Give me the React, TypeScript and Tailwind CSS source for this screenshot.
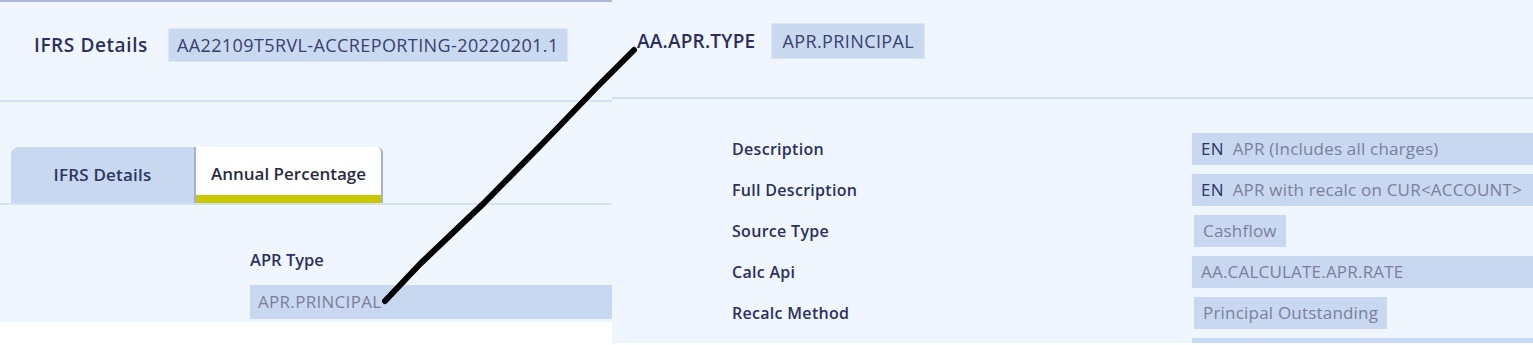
const FONT = "font-['Open_Sans',_'Noto_Sans',_sans-serif]"

interface DetailRow {
  label: string
  value: string
  lang?: string
  fit?: boolean
}

const ROWS: DetailRow[] = [
  { label: 'Description', value: 'APR (Includes all charges)', lang: 'EN' },
  { label: 'Full Description', value: 'APR with recalc on CUR<ACCOUNT>', lang: 'EN' },
  { label: 'Source Type', value: 'Cashflow', fit: true },
  { label: 'Calc Api', value: 'AA.CALCULATE.APR.RATE' },
  { label: 'Recalc Method', value: 'Principal Outstanding', fit: true },
  { label: '', value: '' },
]

function LeftPanel() {
  return (
    <section className="flex h-[322px] w-[612px] shrink-0 flex-col border-t-2 border-[#a9b6d5] bg-[#eff6fe]">
      <div className="flex h-[98px] shrink-0 items-start pl-[34px] pt-[26px]">
        <div className="flex h-[34px] items-center gap-5">
          <span className="text-[19px] font-semibold tracking-[0.6px] text-[#2b3061]">IFRS Details</span>
          <div className="flex h-[34px] items-center border border-[#dde6f2] bg-[#c9d9f0] px-2 text-[18px] tracking-[0.4px] text-[#3a3f6e]">
            AA22109T5RVL-ACCREPORTING-20220201.1
          </div>
        </div>
      </div>
      <div className="h-[2px] shrink-0 bg-[#d2e1f4]" />

      <div className="flex shrink-0 border-b-2 border-[#d2e1f4] pl-[11px] pt-[45px]">
        <div className="flex h-[56px] w-[183px] items-center justify-center rounded-tl-lg bg-[#c8d8f0] text-[17px] font-semibold tracking-[0.2px] text-[#2e3463]">
          IFRS Details
        </div>
        <div className="flex h-[56px] w-[189px] flex-col rounded-tr-md border-l-2 border-r-2 border-[#a5b1cf] bg-white">
          <div className="flex flex-1 items-center justify-center pt-[6px] text-[17px] font-semibold text-[#2b2b3f]">
            Annual Percentage
          </div>
          <div className="h-[8px] bg-[#c9c800]" />
        </div>
      </div>

      <div className="flex flex-col pl-[250px] pt-[43px]">
        <span className="text-[16.5px] font-semibold text-[#2b3061]">APR Type</span>
        <div className="mt-[12px] flex h-[34px] items-center bg-[#c8d8f0] px-2 text-[17px] tracking-[0.3px] text-[#7c7f9c]">
          APR.PRINCIPAL
        </div>
      </div>
    </section>
  )
}

function RightPanel() {
  return (
    <section className="flex h-[343px] flex-1 flex-col overflow-hidden bg-[#eff6fe]">
      <div className="flex h-[97px] shrink-0 items-start pl-[25px] pt-[23px]">
        <div className="flex h-[36px] items-center gap-[16px]">
          <span className="text-[19px] font-semibold tracking-[0.2px] text-[#2b3061]">AA.APR.TYPE</span>
          <div className="flex h-[36px] items-center border border-[#dde6f2] bg-[#c9d9f0] px-[10px] text-[18px] tracking-[0.4px] text-[#3a3f6e]">
            APR.PRINCIPAL
          </div>
        </div>
      </div>
      <div className="h-[2px] shrink-0 bg-[#d2e1f4]" />

      <div className="flex shrink-0 flex-col gap-[9px] pt-[34px]">
        {ROWS.map((row, i) => (
          <div key={i} className="flex h-[32px] shrink-0 items-center">
            <span className="w-[580px] shrink-0 pl-[120px] text-[16px] font-semibold tracking-[0.3px] text-[#2b3061]">
              {row.label}
            </span>
            <div className={row.fit ? 'flex pl-[2px]' : 'flex flex-1'}>
              <div className="flex h-[32px] flex-1 items-center gap-[9px] bg-[#c8d8f0] px-[9px] text-[17px] tracking-[0.2px] text-[#7c7f9c]">
                {row.lang ? <span className="text-[#2e3463]">{row.lang}</span> : null}
                <span>{row.value}</span>
              </div>
            </div>
          </div>
        ))}
      </div>
    </section>
  )
}

export default function App() {
  return (
    <main className={`relative flex h-[345px] w-[1533px] items-start overflow-hidden bg-white ${FONT}`}>
      <LeftPanel />
      <RightPanel />
      <svg className="pointer-events-none absolute left-0 top-0" width="1533" height="345">
        <path d="M385 301 L420 264 L484 203 L545 141 L597 87 L634 50" stroke="#000" strokeWidth="6" strokeLinecap="round" strokeLinejoin="round" fill="none" />
      </svg>
    </main>
  )
}
